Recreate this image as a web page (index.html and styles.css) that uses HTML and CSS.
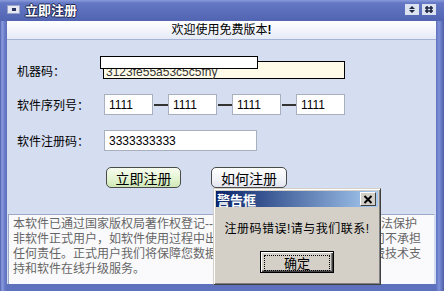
FILE: index.html
```html
<!DOCTYPE html>
<html lang="zh-CN">
<head>
    <meta charset="UTF-8">
    <title>立即注册</title>
    <link rel="stylesheet" href="styles.css">
</head>
<body>
    <div class="window">
        <div class="titlebar">
            <span class="app-icon"><span></span></span>
            <span class="title">立即注册</span>
            <span class="tb-btn">
                <svg width="14" height="11" viewBox="0 0 14 11"><path d="M4 5 L7 2 L10 5 Z M4 6 L7 9 L10 6 Z" fill="#1d2440"/></svg>
            </span>
            <span class="tb-btn">
                <svg width="14" height="11" viewBox="0 0 14 11"><path d="M5 2v7 M9 2v7 M3 4h8 M3 7h8" stroke="#1d2440" stroke-width="1.6" fill="none"/></svg>
            </span>
        </div>

        <div class="client">
            <div class="welcome">欢迎使用免费版本<b>!</b></div>

            <div class="row row-machine">
                <label class="lbl">机器码：</label>
                <div class="machine">
                    <span class="machine-code">3123fe55a53c5c5fny</span>
                    <!-- leftover box drawn over the field -->
                    <span class="ghost"></span>
                </div>
            </div>

            <div class="row">
                <label class="lbl">软件序列号：</label>
                <input class="box serial" type="text" value="1111">
                <span class="dash"></span>
                <input class="box serial" type="text" value="1111">
                <span class="dash"></span>
                <input class="box serial" type="text" value="1111">
                <span class="dash"></span>
                <input class="box serial" type="text" value="1111">
            </div>

            <div class="row">
                <label class="lbl">软件注册码：</label>
                <input class="box regcode" type="text" value="3333333333">
            </div>

            <div class="actions">
                <button class="btn btn-green" type="button">立即注册</button>
                <button class="btn btn-white" type="button">如何注册</button>
            </div>

            <div class="notice">本软件已通过国家版权局著作权登记--依法享有中华人民共和国著作权法保护非软件正式用户，如软件使用过程中出现数据丢失等任何问题，本公司不承担任何责任。正式用户我们将保障您数据的安全，并且为您提供长期免费技术支持和软件在线升级服务。</div>
        </div>

        <div class="dialog">
            <div class="dlg-title">
                <span>警告框</span>
                <span class="dlg-close">
                    <svg width="10" height="9" viewBox="0 0 10 9"><path d="M1.5 1 L8.5 8 M8.5 1 L1.5 8" stroke="#000" stroke-width="2" fill="none"/></svg>
                </span>
            </div>
            <div class="dlg-msg">注册码错误!请与我们联系!</div>
            <button class="dlg-ok" type="button"><span>确定</span></button>
        </div>
    </div>
</body>
</html>
```

FILE: styles.css
```css
body {
    margin: 0;
    font-family: "Liberation Sans", "Noto Sans CJK SC", sans-serif;
    font-size: 12px;
    color: #000;
}

.window {
    position: relative;
    width: 444px;
    height: 291px;
    display: flex;
    flex-direction: column;
    background: linear-gradient(to right, #4b5da8 0, #8c9de0 2px, #6678c6 5px, #5d71bd 7px,
        #5d71bd calc(100% - 8px), #7f91d8 calc(100% - 5px), #4b5da8 100%);
}

.titlebar {
    height: 21px;
    display: flex;
    align-items: center;
    background: linear-gradient(#8b9cdc 0, #6477c4 3px, #5a6dbb 60%, #5064b2 100%);
}

.app-icon {
    width: 13px;
    height: 9px;
    margin-left: 7px;
    margin-top: -2px;
    background: #e6e9f4;
    border: 1px solid #9aa4c8;
    box-sizing: border-box;
    display: flex;
    align-items: center;
    justify-content: center;
}

.app-icon span {
    width: 4px;
    height: 3px;
    background: #2a3460;
}

.title {
    margin-left: 5px;
    margin-top: -2px;
    color: #fff;
    font-size: 13px;
    font-weight: bold;
    text-shadow: 1px 0 #1c2550, -1px 0 #1c2550, 0 1px #1c2550, 0 -1px #1c2550;
    flex: 1;
}

.tb-btn {
    width: 14px;
    height: 11px;
    margin-right: 3px;
    margin-top: -2px;
    background: #dde2f1;
    display: flex;
}

.tb-btn:last-child {
    margin-right: 8px;
}

.client {
    flex: 1;
    margin: 0 8px 7px 7px;
    background: #d5ddf1;
    display: flex;
    flex-direction: column;
}

.welcome {
    height: 18px;
    line-height: 18px;
    text-align: center;
    border-bottom: 1px solid #a3b2d6;
    background: linear-gradient(#ffffff, #e5eaf6);
}

.row {
    display: flex;
    align-items: center;
    padding-left: 10px;
    margin-top: 15px;
}

.row-machine {
    margin-top: 21px;
}

.lbl {
    width: 87px;
    font-size: 12px;
}

.machine {
    position: relative;
    width: 242px;
    height: 18px;
    margin-left: -1px;
    box-sizing: border-box;
    border: 1px solid #000;
    background: #fffbe8;
}

.machine-code {
    display: block;
    padding: 3px 0 0 2px;
    line-height: 14px;
    color: #333;
    font-size: 12px;
}

.ghost {
    position: absolute;
    left: -4px;
    top: -6px;
    width: 158px;
    height: 13px;
    box-sizing: border-box;
    border: 1px solid #000;
    background: #fff;
}

.box {
    height: 21px;
    box-sizing: border-box;
    border: 1px solid #a9b0bd;
    background: #fff;
    padding: 0 0 0 4px;
    margin: 0;
    font-family: "Liberation Sans", sans-serif;
    font-size: 12px;
    color: #000;
}

.serial {
    width: 49px;
}

.dash {
    width: 14px;
    height: 2px;
    margin-left: 1px;
    background: #333;
}

.regcode {
    width: 153px;
}

.actions {
    display: flex;
    margin-top: 16px;
    padding-left: 99px;
    gap: 30px;
}

.btn {
    height: 21px;
    padding: 0;
    border: 1px solid #4a4a4a;
    border-radius: 5px;
    font-family: "Noto Sans CJK SC", sans-serif;
    font-size: 14px;
    line-height: 18px;
    color: #000;
}

.btn-green {
    width: 75px;
    background: linear-gradient(#f8fdf0, #e2f3cf 60%, #cfe8b6);
}

.btn-white {
    width: 76px;
    background: linear-gradient(#ffffff, #f2f3f8 60%, #e2e4ee);
}

.notice {
    flex: 1;
    margin: 26px 1px 0 1px;
    padding: 2px 9px 0 4px;
    border: 1px solid #9ea9c8;
    border-right-color: #d5ddf1;
    border-bottom: none;
    background: #fafafc;
    color: #666;
    font-size: 12px;
    line-height: 15px;
    overflow: hidden;
}

.dialog {
    position: absolute;
    left: 213px;
    top: 188px;
    width: 168px;
    height: 97px;
    box-sizing: border-box;
    background: #d4d0c8;
    border: 1px solid;
    border-color: #d4d0c8 #404040 #404040 #d4d0c8;
    box-shadow: inset 1px 1px #fff, inset -1px -1px #808080;
    padding: 2px;
    display: flex;
    flex-direction: column;
    align-items: center;
}

.dlg-title {
    align-self: stretch;
    height: 16px;
    display: flex;
    align-items: center;
    justify-content: space-between;
    padding: 0 2px 0 1px;
    background: linear-gradient(to right, #0a246a, #a6caf0);
    color: #fff;
    font-size: 13px;
    font-weight: bold;
}

.dlg-close {
    width: 16px;
    height: 14px;
    box-sizing: border-box;
    background: #d4d0c8;
    border: 1px solid;
    border-color: #fff #404040 #404040 #fff;
    display: flex;
    align-items: center;
    justify-content: center;
}

.dlg-msg {
    margin-top: 14px;
    font-size: 12px;
    letter-spacing: 0.5px;
    line-height: 17px;
}

.dlg-ok {
    width: 74px;
    height: 22px;
    margin-top: 13px;
    padding: 3px;
    background: #d4d0c8;
    border: 1px solid #000;
    box-shadow: inset 1px 1px #fff, inset -1px -1px #404040, inset -2px -2px #808080;
    font-family: "Noto Sans CJK SC", sans-serif;
    font-size: 13px;
    color: #000;
}

.dlg-ok span {
    display: block;
    height: 14px;
    line-height: 14px;
    border: 1px dotted #000;
}
```
